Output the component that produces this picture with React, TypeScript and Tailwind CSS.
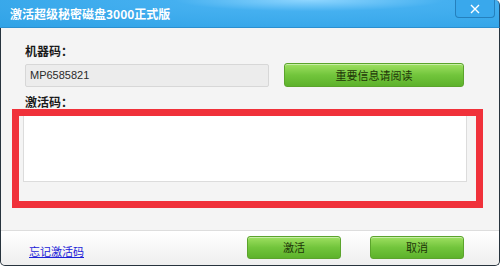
import React from 'react'

const cjk = "font-['Microsoft_YaHei','Noto_Sans_CJK_SC',sans-serif]"

const GreenButton: React.FC<{ label: string; className?: string }> = ({ label, className = '' }) => (
  <button
    type="button"
    className={`h-[23px] rounded-[3px] border border-[#5ba42c] bg-[linear-gradient(#9ee061,#72c53c_50%,#5db22b)] text-[11px] text-[#1e3608] shadow-[inset_0_1px_0_rgba(255,255,255,0.45)] ${className}`}
  >
    {label}
  </button>
)

export default function App() {
  return (
    <div className={`w-[500px] h-[266px] flex flex-col overflow-hidden ${cjk}`}>
      {/* title bar */}
      <div className="h-[28px] flex items-start bg-[radial-gradient(ellipse_90%_140%_at_62%_0%,#8fd6ff_0%,#45b0f0_30%,#2fa2e6_100%)] border-b border-[#2a8fd0] border-r border-r-[#1d4f78] rounded-tr-[5px]">
        <span className="pl-[10px] pt-[6px] text-[12px] leading-[16px] font-bold text-white">
          激活超级秘密磁盘3000正式版
        </span>
        <button
          type="button"
          aria-label="close"
          className="ml-auto mr-[4px] w-[40px] h-[18px] flex items-center justify-center rounded-b-[4px] border border-t-0 border-[#2580bd] bg-[#39a8ec]"
        >
          <svg width="10" height="10" viewBox="0 0 10 10">
            <path d="M1 1L9 9M9 1L1 9" stroke="white" strokeWidth="1.4" />
          </svg>
        </button>
      </div>

      {/* body */}
      <div className="flex-1 flex flex-col bg-[#f4f4f4] border-x border-b border-[#27333d] rounded-b-[5px]">
        <div className="pt-[16px] pl-[24px]">
          <div className="text-[12px] leading-[14px] font-bold text-[#1a1a1a]">机器码：</div>
          <div className="mt-[5px] flex items-center gap-[15px]">
            <div className="w-[244px] h-[23px] flex items-center pl-[4px] bg-[#ececec] border border-[#d7d7d7] rounded-[2px] text-[11px] text-[#2a2a2a] font-['Liberation_Sans',sans-serif]">
              MP6585821
            </div>
            <GreenButton label="重要信息请阅读" className="w-[180px] h-[24px]" />
          </div>
          <div className="mt-[8px] text-[12px] leading-[14px] font-bold text-[#1a1a1a]">激活码：</div>
        </div>

        <div className="ml-[11px] w-[471px] h-[99px] border-[7px] border-[#f0313a] pl-[4px] pr-[9px] pb-[19px]">
          <div className="h-full bg-white border-x border-b border-[#dcdcdc]" />
        </div>

        <div className="mt-auto h-[35px] flex items-start pt-[5px] border-t border-[#dddddd] bg-[linear-gradient(#ffffff,#eeeeee)] rounded-b-[5px]">
          <a className="ml-[28px] mt-[8px] text-[11px] leading-[14px] text-[#1b22d8] underline">忘记激活码</a>
          <GreenButton label="激活" className="ml-[163px] w-[94px]" />
          <GreenButton label="取消" className="ml-[29px] w-[94px]" />
        </div>
      </div>
    </div>
  )
}
